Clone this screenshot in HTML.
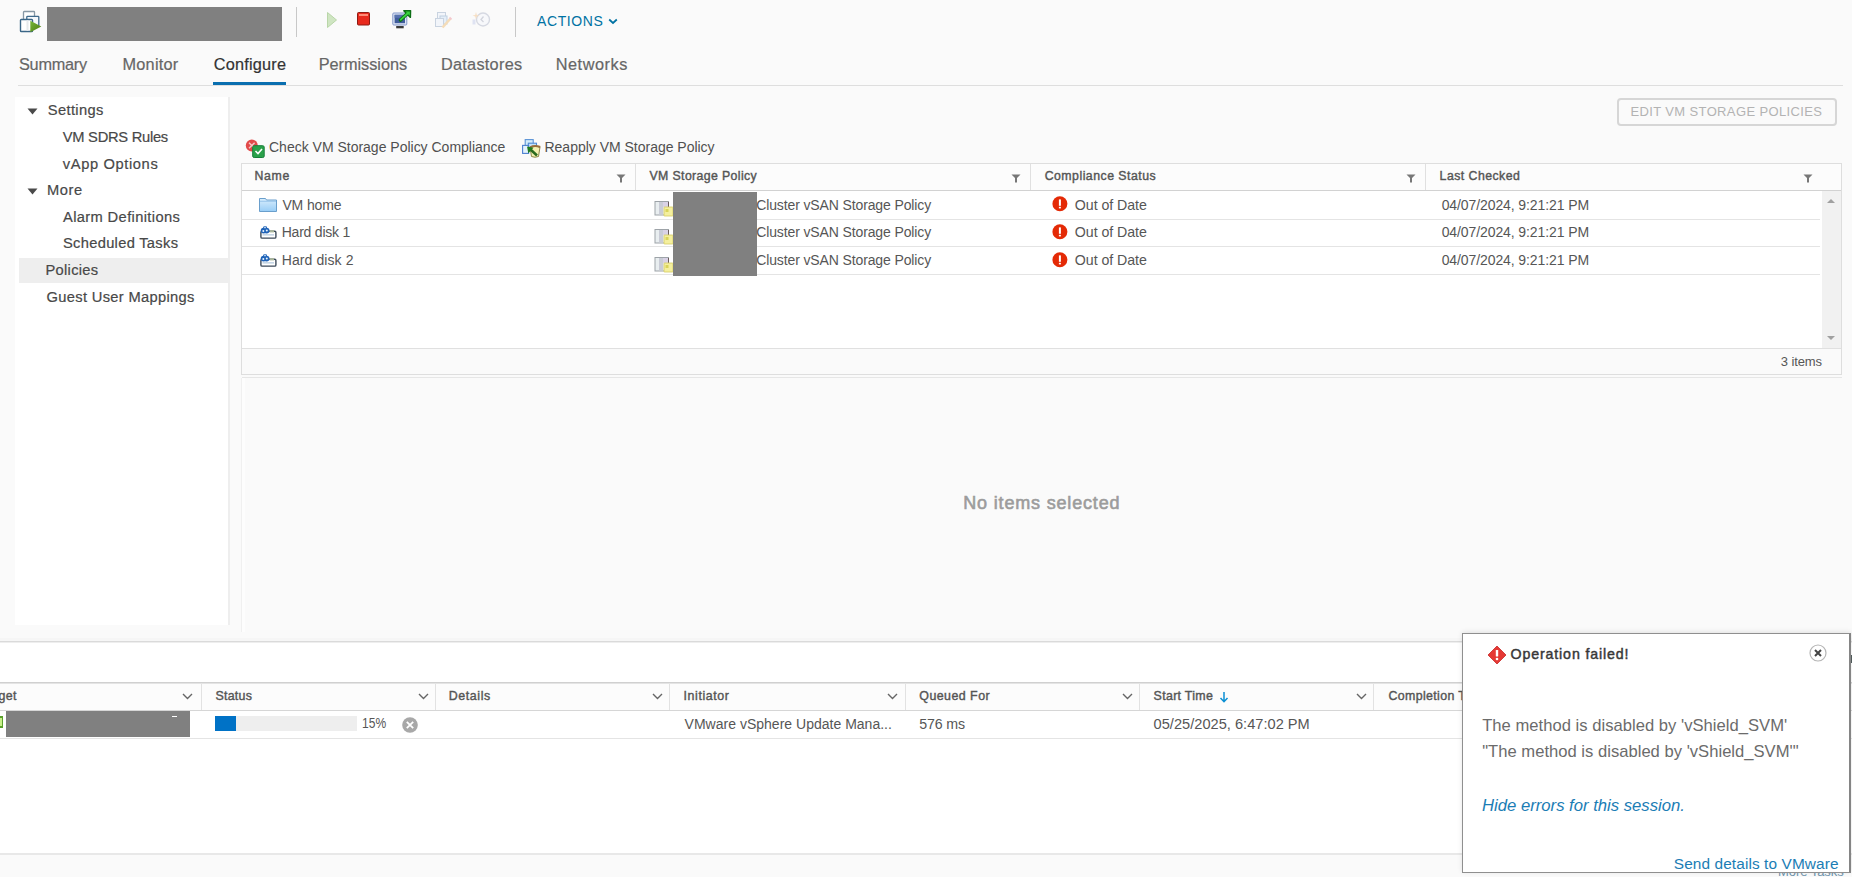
<!DOCTYPE html>
<html><head><meta charset="utf-8"><title>vSphere</title>
<style>
html,body{margin:0;padding:0;}
body{width:1852px;height:877px;overflow:hidden;position:relative;background:#fafafa;font-family:"Liberation Sans", sans-serif;}
body>div,body>svg{position:absolute;white-space:nowrap;}
</style></head><body>
<svg style="left:18px;top:9px;" width="26" height="26" viewBox="0 0 26 26">
<defs><linearGradient id="vg" x1="0" y1="0" x2="1" y2="1"><stop offset="0" stop-color="#77b83a"/><stop offset="1" stop-color="#4c7a12"/></linearGradient></defs>
<rect x="5.5" y="2.5" width="11" height="9" rx="0.7" fill="#fff" stroke="#8798a5" stroke-width="1.3"/>
<rect x="8.8" y="7.3" width="12" height="10" rx="0.7" fill="#f4f8fc" stroke="#3f6a8c" stroke-width="1.3"/>
<rect x="2.5" y="10.5" width="12" height="12" rx="0.8" fill="#fff" stroke="#3b6687" stroke-width="1.4"/>
<rect x="8.5" y="11.3" width="2" height="10.5" fill="#e6e9ec"/>
<path d="M12.3 11.8 L23.3 17.5 L12.3 23.3 Z" fill="url(#vg)"/>
</svg>
<div style="left:47px;top:7px;width:235px;height:34px;background:#808080;"></div>
<div style="left:296px;top:7px;width:1px;height:30px;background:#c8c8c8;"></div>
<div style="left:515px;top:7px;width:1px;height:30px;background:#c8c8c8;"></div>
<svg style="left:326px;top:11px;" width="12" height="18" viewBox="0 0 12 18"><path d="M1.5 1.5 L10.5 9 L1.5 16.5 Z" fill="#cfe5c2" stroke="#b9d6a8" stroke-width="1"/></svg>
<svg style="left:357px;top:12px;" width="13" height="14" viewBox="0 0 13 14"><rect x="0.5" y="0.5" width="12" height="12.5" rx="1" fill="#e8291c" stroke="#8d1a12" stroke-width="1"/><rect x="2" y="2" width="9" height="2" fill="#ff8a75"/></svg>
<svg style="left:391px;top:8px;" width="22" height="22" viewBox="0 0 22 22">
<rect x="1.8" y="5" width="14" height="12" rx="1" fill="#dfe6f6" stroke="#8096c9" stroke-width="1"/>
<rect x="3.6" y="6.8" width="10.4" height="8.4" fill="#3f5c9c"/>
<rect x="3.6" y="6.8" width="10.4" height="3" fill="#5873b0"/>
<rect x="5.2" y="18" width="7.5" height="2.3" fill="#3a3a3a"/>
<path d="M9.5 12 L17 5" stroke="#0d6e16" stroke-width="3.6" stroke-linecap="round"/>
<path d="M12.8 2.8 L19.6 2.6 L19.4 9.4 Z" fill="#39d43f" stroke="#0d6e16" stroke-width="1.4" stroke-linejoin="round"/>
<path d="M9.8 11.7 L16.5 5.5" stroke="#39d43f" stroke-width="1.8" stroke-linecap="round"/>
</svg>
<svg style="left:434px;top:11px;" width="20" height="19" viewBox="0 0 20 19">
<rect x="3.5" y="1.5" width="8" height="7" fill="#f2f5fa" stroke="#c9d3e0" stroke-width="1"/>
<rect x="6" y="5" width="7" height="8" fill="#e4eef8" stroke="#c0cfe0" stroke-width="1"/>
<rect x="1.5" y="7.5" width="8" height="8" fill="#f2f5fa" stroke="#c9d3e0" stroke-width="1"/>
<path d="M8.5 16.5 L16.5 7.5" stroke="#f4dcb8" stroke-width="2.6"/>
<path d="M15.5 6.5 L17.5 8.3" stroke="#f4c8cf" stroke-width="1.8"/>
</svg>
<svg style="left:470px;top:10px;" width="22" height="19" viewBox="0 0 22 19">
<circle cx="13" cy="9.5" r="6.5" fill="#f7f8fb" stroke="#d6d9e2" stroke-width="1.4"/>
<path d="M13.5 6.5 L11 9.5 L13.5 12" stroke="#d2d5dd" stroke-width="1.3" fill="none"/>
<path d="M6 2 L6.8 5 L9.5 5.5 L6.8 6.5 L6 9.5 L5.2 6.5 L2.5 5.5 L5.2 5 Z" fill="#f6dfc4"/>
<rect x="2.5" y="9.5" width="3" height="5" fill="#dfe3f2"/>
</svg>
<div style="left:537.00px;top:12.90px;font-size:14px;line-height:16.8px;color:#0072a3;letter-spacing:0.618px;">ACTIONS</div>
<svg style="left:608px;top:18px;" width="10" height="7" viewBox="0 0 10 7"><path d="M1.2 1.5 L5 5 L8.8 1.5" stroke="#0072a3" stroke-width="1.7" fill="none"/></svg>
<div style="left:19.00px;top:54.52px;font-size:16.3px;line-height:19.56px;color:#666;letter-spacing:-0.253px;-webkit-text-stroke:0.2px currentColor;">Summary</div>
<div style="left:122.50px;top:54.52px;font-size:16.3px;line-height:19.56px;color:#666;letter-spacing:0.239px;-webkit-text-stroke:0.2px currentColor;">Monitor</div>
<div style="left:213.70px;top:54.52px;font-size:16.3px;line-height:19.56px;color:#333;letter-spacing:0.22px;-webkit-text-stroke:0.2px currentColor;">Configure</div>
<div style="left:318.70px;top:54.52px;font-size:16.3px;line-height:19.56px;color:#666;letter-spacing:-0.022px;-webkit-text-stroke:0.2px currentColor;">Permissions</div>
<div style="left:440.90px;top:54.52px;font-size:16.3px;line-height:19.56px;color:#666;letter-spacing:0.279px;-webkit-text-stroke:0.2px currentColor;">Datastores</div>
<div style="left:555.70px;top:54.52px;font-size:16.3px;line-height:19.56px;color:#666;letter-spacing:0.541px;-webkit-text-stroke:0.2px currentColor;">Networks</div>
<div style="left:18px;top:85px;width:1825px;height:1px;background:#dedede;"></div>
<div style="left:213px;top:82px;width:73px;height:3px;background:#0a6fb0;"></div>
<div style="left:15px;top:97px;width:213px;height:528px;background:#fff;"></div>
<div style="left:228px;top:97px;width:2px;height:528px;background:#eeeeee;"></div>
<div style="left:19px;top:258px;width:209px;height:25px;background:#eeeeee;"></div>
<svg style="left:27px;top:108px;" width="11" height="7" viewBox="0 0 11 7"><path d="M0.5 0.5 L10.5 0.5 L5.5 6.5 Z" fill="#4a4a4a"/></svg>
<svg style="left:27px;top:187.5px;" width="11" height="7" viewBox="0 0 11 7"><path d="M0.5 0.5 L10.5 0.5 L5.5 6.5 Z" fill="#4a4a4a"/></svg>
<div style="left:47.80px;top:102.44px;font-size:14.7px;line-height:17.64px;color:#484848;letter-spacing:0.353px;-webkit-text-stroke:0.2px currentColor;">Settings</div>
<div style="left:62.80px;top:128.94px;font-size:14.7px;line-height:17.64px;color:#484848;letter-spacing:-0.267px;-webkit-text-stroke:0.2px currentColor;">VM SDRS Rules</div>
<div style="left:62.80px;top:155.53px;font-size:14.7px;line-height:17.64px;color:#484848;letter-spacing:0.615px;-webkit-text-stroke:0.2px currentColor;">vApp Options</div>
<div style="left:47.00px;top:182.13px;font-size:14.7px;line-height:17.64px;color:#484848;letter-spacing:0.535px;-webkit-text-stroke:0.2px currentColor;">More</div>
<div style="left:63.00px;top:208.73px;font-size:14.7px;line-height:17.64px;color:#484848;letter-spacing:0.365px;-webkit-text-stroke:0.2px currentColor;">Alarm Definitions</div>
<div style="left:63.00px;top:235.34px;font-size:14.7px;line-height:17.64px;color:#484848;letter-spacing:0.3px;-webkit-text-stroke:0.2px currentColor;">Scheduled Tasks</div>
<div style="left:45.50px;top:261.93px;font-size:14.7px;line-height:17.64px;color:#484848;letter-spacing:0.291px;-webkit-text-stroke:0.2px currentColor;">Policies</div>
<div style="left:46.50px;top:288.53px;font-size:14.7px;line-height:17.64px;color:#484848;letter-spacing:0.322px;-webkit-text-stroke:0.2px currentColor;">Guest User Mappings</div>
<div style="left:1617px;top:98px;width:220px;height:28px;background:transparent;border:2px solid #d6d6d6;border-radius:4px;box-sizing:border-box;"></div>
<div style="left:1630.50px;top:103.85px;font-size:13px;line-height:15.6px;color:#b3b3b3;letter-spacing:0.366px;">EDIT VM STORAGE POLICIES</div>
<svg style="left:244px;top:138px;" width="22" height="21" viewBox="0 0 22 21">
<circle cx="7.8" cy="7.5" r="6" fill="#e24a4a"/>
<path d="M5 4.7 L10.6 10.3 M10.6 4.7 L5 10.3" stroke="#f6c6c6" stroke-width="1.4"/>
<rect x="8.7" y="7.7" width="11.5" height="11.8" rx="1.5" fill="#2aa14a" stroke="#17803a" stroke-width="1"/>
<path d="M11.5 13 L14 15.5 L18 11" stroke="#fff" stroke-width="1.6" fill="none"/>
</svg>
<div style="left:269.00px;top:138.90px;font-size:14px;line-height:16.8px;color:#505050;letter-spacing:-0.005px;">Check VM Storage Policy Compliance</div>
<svg style="left:516px;top:134px;" width="30" height="28" viewBox="0 0 30 28">
<rect x="9.2" y="5.6" width="8" height="7.5" fill="#d3ecfb" stroke="#5b93d6" stroke-width="1.1"/>
<rect x="12.3" y="9.2" width="8.2" height="7" fill="#c2e2fa" stroke="#4f89d2" stroke-width="1.1"/>
<rect x="6.6" y="11.4" width="6" height="8" fill="#e3f3fd" stroke="#4c7fd0" stroke-width="1.1"/>
<path d="M14 13.5 Q19 11 24 13 L22.5 22.5 Q19 24 15.5 22.5 Z" fill="#f3f0b0" stroke="#7f7a3a" stroke-width="0.9"/>
<path d="M14 13.3 Q19 10.8 24.2 13" stroke="#9a6f3c" stroke-width="2" fill="none"/>
<path d="M21 21.5 L14.5 15.5" stroke="#2a6a1e" stroke-width="2.6"/>
<path d="M11 12.5 L17.5 13.8 L12.3 19.3 Z" fill="#1f7a1f"/>
</svg>
<div style="left:544.50px;top:138.90px;font-size:14px;line-height:16.8px;color:#505050;letter-spacing:-0.013px;">Reapply VM Storage Policy</div>
<div style="left:241px;top:163px;width:1601px;height:212px;background:#fff;border:1px solid #dedede;box-sizing:border-box;"></div>
<div style="left:242px;top:164px;width:1599px;height:26px;background:#fcfcfc;"></div>
<div style="left:242px;top:190px;width:1599px;height:1px;background:#d2d2d2;"></div>
<div style="left:635px;top:164px;width:1px;height:26px;background:#e0e0e0;"></div>
<div style="left:1030px;top:164px;width:1px;height:26px;background:#e0e0e0;"></div>
<div style="left:1425px;top:164px;width:1px;height:26px;background:#e0e0e0;"></div>
<div style="left:254.40px;top:168.81px;font-size:12.3px;line-height:14.76px;color:#555555;letter-spacing:0.679px;-webkit-text-stroke:0.4px currentColor;">Name</div>
<div style="left:649.50px;top:168.81px;font-size:12.3px;line-height:14.76px;color:#555555;letter-spacing:0.381px;-webkit-text-stroke:0.4px currentColor;">VM Storage Policy</div>
<div style="left:1044.70px;top:168.81px;font-size:12.3px;line-height:14.76px;color:#555555;letter-spacing:0.484px;-webkit-text-stroke:0.4px currentColor;">Compliance Status</div>
<div style="left:1439.60px;top:168.81px;font-size:12.3px;line-height:14.76px;color:#555555;letter-spacing:0.459px;-webkit-text-stroke:0.4px currentColor;">Last Checked</div>
<svg style="left:615.5px;top:174px;" width="10" height="9" viewBox="0 0 10 9"><path d="M0.5 0.5 L9.5 0.5 L6 4 L6 8.5 L4 8.5 L4 4 Z" fill="#777"/></svg>
<svg style="left:1010.5px;top:174px;" width="10" height="9" viewBox="0 0 10 9"><path d="M0.5 0.5 L9.5 0.5 L6 4 L6 8.5 L4 8.5 L4 4 Z" fill="#777"/></svg>
<svg style="left:1406px;top:174px;" width="10" height="9" viewBox="0 0 10 9"><path d="M0.5 0.5 L9.5 0.5 L6 4 L6 8.5 L4 8.5 L4 4 Z" fill="#777"/></svg>
<svg style="left:1802.5px;top:174px;" width="10" height="9" viewBox="0 0 10 9"><path d="M0.5 0.5 L9.5 0.5 L6 4 L6 8.5 L4 8.5 L4 4 Z" fill="#777"/></svg>
<div style="left:242px;top:219px;width:1578px;height:1px;background:#e4e4e4;"></div>
<div style="left:242px;top:246px;width:1578px;height:1px;background:#e4e4e4;"></div>
<div style="left:242px;top:274px;width:1578px;height:1px;background:#e4e4e4;"></div>
<svg style="left:258px;top:197px;" width="20" height="16" viewBox="0 0 20 16">
<defs><linearGradient id="fg" x1="0" y1="0" x2="0" y2="1"><stop offset="0" stop-color="#d9eefd"/><stop offset="1" stop-color="#98cdf6"/></linearGradient></defs>
<path d="M1.5 1.5 L7.5 1.5 L8.5 3 L18.5 3 L18.5 14.5 L1.5 14.5 Z" fill="url(#fg)" stroke="#6a9fcc" stroke-width="1" stroke-linejoin="round"/>
<path d="M2 4.3 L18 4.3" stroke="#8dbde6" stroke-width="0.8"/>
</svg>
<svg style="left:260px;top:225px;" width="17" height="14" viewBox="0 0 17 14">
<rect x="0.9" y="6.3" width="15" height="6.8" rx="1.2" fill="#fff" stroke="#3c4a5a" stroke-width="1.4"/>
<rect x="2.5" y="9.2" width="11.5" height="1.3" fill="#b8cde0"/>
<rect x="9.5" y="5.2" width="4.5" height="2.2" fill="#a9b59a"/>
<circle cx="3.6" cy="5.6" r="2.9" fill="#1f63b8"/>
<circle cx="6.6" cy="5.6" r="2.9" fill="#1f63b8"/>
<rect x="3.2" y="1.2" width="3.8" height="3.6" rx="1.2" fill="#1f63b8"/>
<circle cx="3.3" cy="5.9" r="1" fill="#e8f4ff"/>
<circle cx="6.8" cy="5.4" r="1" fill="#e8f4ff"/>
<circle cx="5" cy="2.6" r="0.8" fill="#e8f4ff"/>
</svg>
<svg style="left:260px;top:253px;" width="17" height="14" viewBox="0 0 17 14">
<rect x="0.9" y="6.3" width="15" height="6.8" rx="1.2" fill="#fff" stroke="#3c4a5a" stroke-width="1.4"/>
<rect x="2.5" y="9.2" width="11.5" height="1.3" fill="#b8cde0"/>
<rect x="9.5" y="5.2" width="4.5" height="2.2" fill="#a9b59a"/>
<circle cx="3.6" cy="5.6" r="2.9" fill="#1f63b8"/>
<circle cx="6.6" cy="5.6" r="2.9" fill="#1f63b8"/>
<rect x="3.2" y="1.2" width="3.8" height="3.6" rx="1.2" fill="#1f63b8"/>
<circle cx="3.3" cy="5.9" r="1" fill="#e8f4ff"/>
<circle cx="6.8" cy="5.4" r="1" fill="#e8f4ff"/>
<circle cx="5" cy="2.6" r="0.8" fill="#e8f4ff"/>
</svg>
<div style="left:282.40px;top:196.90px;font-size:14px;line-height:16.8px;color:#565656;letter-spacing:-0.121px;">VM home</div>
<div style="left:281.70px;top:224.40px;font-size:14px;line-height:16.8px;color:#565656;letter-spacing:-0.212px;">Hard disk 1</div>
<div style="left:281.70px;top:252.00px;font-size:14px;line-height:16.8px;color:#565656;letter-spacing:0.098px;">Hard disk 2</div>
<svg style="left:654px;top:200px;" width="20" height="17" viewBox="0 0 20 17">
<rect x="1" y="1.5" width="13.5" height="13.5" fill="#e9eef0" stroke="#9da3a8" stroke-width="1"/>
<rect x="5" y="2" width="4" height="12.5" fill="#c9ccd6"/>
<rect x="9" y="2" width="5" height="5" fill="#d9d2e6"/>
<rect x="14" y="2" width="1" height="6" fill="#6b5b5b"/>
<rect x="10" y="7" width="9" height="9" rx="0.5" fill="#f4ef9e" stroke="#d6cc60" stroke-width="0.8"/>
<rect x="11.5" y="9" width="3" height="3" fill="#d9d45a"/>
</svg>
<svg style="left:654px;top:228px;" width="20" height="17" viewBox="0 0 20 17">
<rect x="1" y="1.5" width="13.5" height="13.5" fill="#e9eef0" stroke="#9da3a8" stroke-width="1"/>
<rect x="5" y="2" width="4" height="12.5" fill="#c9ccd6"/>
<rect x="9" y="2" width="5" height="5" fill="#d9d2e6"/>
<rect x="14" y="2" width="1" height="6" fill="#6b5b5b"/>
<rect x="10" y="7" width="9" height="9" rx="0.5" fill="#f4ef9e" stroke="#d6cc60" stroke-width="0.8"/>
<rect x="11.5" y="9" width="3" height="3" fill="#d9d45a"/>
</svg>
<svg style="left:654px;top:256px;" width="20" height="17" viewBox="0 0 20 17">
<rect x="1" y="1.5" width="13.5" height="13.5" fill="#e9eef0" stroke="#9da3a8" stroke-width="1"/>
<rect x="5" y="2" width="4" height="12.5" fill="#c9ccd6"/>
<rect x="9" y="2" width="5" height="5" fill="#d9d2e6"/>
<rect x="14" y="2" width="1" height="6" fill="#6b5b5b"/>
<rect x="10" y="7" width="9" height="9" rx="0.5" fill="#f4ef9e" stroke="#d6cc60" stroke-width="0.8"/>
<rect x="11.5" y="9" width="3" height="3" fill="#d9d45a"/>
</svg>
<div style="left:673px;top:192px;width:84px;height:84px;background:#808080;"></div>
<div style="left:756.20px;top:196.90px;font-size:14px;line-height:16.8px;color:#565656;letter-spacing:-0.122px;">Cluster vSAN Storage Policy</div>
<div style="left:1074.80px;top:196.71px;font-size:14.2px;line-height:17.04px;color:#565656;letter-spacing:-0.046px;">Out of Date</div>
<div style="left:1441.70px;top:196.90px;font-size:14px;line-height:16.8px;color:#565656;letter-spacing:-0.099px;">04/07/2024, 9:21:21 PM</div>
<div style="left:756.20px;top:224.40px;font-size:14px;line-height:16.8px;color:#565656;letter-spacing:-0.122px;">Cluster vSAN Storage Policy</div>
<div style="left:1074.80px;top:224.21px;font-size:14.2px;line-height:17.04px;color:#565656;letter-spacing:-0.046px;">Out of Date</div>
<div style="left:1441.70px;top:224.40px;font-size:14px;line-height:16.8px;color:#565656;letter-spacing:-0.099px;">04/07/2024, 9:21:21 PM</div>
<div style="left:756.20px;top:252.00px;font-size:14px;line-height:16.8px;color:#565656;letter-spacing:-0.122px;">Cluster vSAN Storage Policy</div>
<div style="left:1074.80px;top:251.81px;font-size:14.2px;line-height:17.04px;color:#565656;letter-spacing:-0.046px;">Out of Date</div>
<div style="left:1441.70px;top:252.00px;font-size:14px;line-height:16.8px;color:#565656;letter-spacing:-0.099px;">04/07/2024, 9:21:21 PM</div>
<svg style="left:1052px;top:196px;" width="16" height="16" viewBox="0 0 16 16"><circle cx="7.9" cy="7.7" r="7.5" fill="#e42a06"/><rect x="6.9" y="3.4" width="2" height="6.4" fill="#fff"/><rect x="6.9" y="10.8" width="2" height="1.6" fill="#fff"/></svg>
<svg style="left:1052px;top:224px;" width="16" height="16" viewBox="0 0 16 16"><circle cx="7.9" cy="7.7" r="7.5" fill="#e42a06"/><rect x="6.9" y="3.4" width="2" height="6.4" fill="#fff"/><rect x="6.9" y="10.8" width="2" height="1.6" fill="#fff"/></svg>
<svg style="left:1052px;top:252px;" width="16" height="16" viewBox="0 0 16 16"><circle cx="7.9" cy="7.7" r="7.5" fill="#e42a06"/><rect x="6.9" y="3.4" width="2" height="6.4" fill="#fff"/><rect x="6.9" y="10.8" width="2" height="1.6" fill="#fff"/></svg>
<div style="left:1822px;top:191px;width:19px;height:157px;background:#f1f1f1;"></div>
<svg style="left:1825px;top:197px;" width="12" height="8" viewBox="0 0 12 8"><path d="M2 6 L6 2 L10 6 Z" fill="#a0a0a0"/></svg>
<svg style="left:1825px;top:334px;" width="12" height="8" viewBox="0 0 12 8"><path d="M2 2 L6 6 L10 2 Z" fill="#a0a0a0"/></svg>
<div style="left:242px;top:348px;width:1599px;height:26px;background:#fafafa;"></div>
<div style="left:242px;top:348px;width:1599px;height:1px;background:#e0e0e0;"></div>
<div style="left:1780.80px;top:353.85px;font-size:13px;line-height:15.6px;color:#565656;letter-spacing:-0.117px;">3 items</div>
<div style="left:242px;top:377px;width:1600px;height:1px;background:#e6e6e6;"></div>
<div style="left:244px;top:378px;width:1599px;height:254px;background:#fafafa;"></div>
<div style="left:241px;top:378px;width:4px;height:254px;background:#fdfdfd;"></div>
<div style="left:241px;top:378px;width:1px;height:254px;background:#f0f0f0;"></div>
<div style="left:963.30px;top:492.70px;font-size:18px;line-height:21.6px;color:#9c9c9c;letter-spacing:0.822px;-webkit-text-stroke:0.6px currentColor;">No items selected</div>
<div style="left:0px;top:638px;width:1852px;height:3px;background:#f6f6f6;"></div>
<div style="left:0px;top:641px;width:1852px;height:1px;background:#dadada;"></div>
<div style="left:0px;top:642px;width:1852px;height:1px;background:#eeeeee;"></div>
<div style="left:0px;top:643px;width:1852px;height:210px;background:#fff;"></div>
<div style="left:0px;top:682px;width:1852px;height:1px;background:#d0d0d0;"></div>
<div style="left:0px;top:683px;width:1852px;height:1px;background:#e4e4e4;"></div>
<div style="left:0px;top:684px;width:1852px;height:26px;background:#fcfcfc;"></div>
<div style="left:0px;top:710px;width:1852px;height:1px;background:#d6d6d6;"></div>
<div style="left:201px;top:684px;width:1px;height:26px;background:#e2e2e2;"></div>
<div style="left:435px;top:684px;width:1px;height:26px;background:#e2e2e2;"></div>
<div style="left:669px;top:684px;width:1px;height:26px;background:#e2e2e2;"></div>
<div style="left:905px;top:684px;width:1px;height:26px;background:#e2e2e2;"></div>
<div style="left:1139px;top:684px;width:1px;height:26px;background:#e2e2e2;"></div>
<div style="left:1373px;top:684px;width:1px;height:26px;background:#e2e2e2;"></div>
<div style="left:-1.50px;top:688.62px;font-size:12.4px;line-height:14.88px;color:#555555;letter-spacing:0.359px;-webkit-text-stroke:0.4px currentColor;">get</div>
<div style="left:215.40px;top:688.62px;font-size:12.4px;line-height:14.88px;color:#555555;letter-spacing:0.274px;-webkit-text-stroke:0.4px currentColor;">Status</div>
<div style="left:448.70px;top:688.62px;font-size:12.4px;line-height:14.88px;color:#555555;letter-spacing:0.62px;-webkit-text-stroke:0.4px currentColor;">Details</div>
<div style="left:683.60px;top:688.62px;font-size:12.4px;line-height:14.88px;color:#555555;letter-spacing:0.587px;-webkit-text-stroke:0.4px currentColor;">Initiator</div>
<div style="left:919.30px;top:688.62px;font-size:12.4px;line-height:14.88px;color:#555555;letter-spacing:0.467px;-webkit-text-stroke:0.4px currentColor;">Queued For</div>
<div style="left:1153.60px;top:688.62px;font-size:12.4px;line-height:14.88px;color:#555555;letter-spacing:0.312px;-webkit-text-stroke:0.4px currentColor;">Start Time</div>
<div style="left:1388.50px;top:688.62px;font-size:12.4px;line-height:14.88px;color:#555555;letter-spacing:0.353px;-webkit-text-stroke:0.4px currentColor;">Completion T</div>
<svg style="left:182px;top:692px;" width="11" height="9" viewBox="0 0 11 9"><path d="M1 2 L5.5 6.5 L10 2" stroke="#666" stroke-width="1.4" fill="none"/></svg>
<svg style="left:418px;top:692px;" width="11" height="9" viewBox="0 0 11 9"><path d="M1 2 L5.5 6.5 L10 2" stroke="#666" stroke-width="1.4" fill="none"/></svg>
<svg style="left:652px;top:692px;" width="11" height="9" viewBox="0 0 11 9"><path d="M1 2 L5.5 6.5 L10 2" stroke="#666" stroke-width="1.4" fill="none"/></svg>
<svg style="left:886.5px;top:692px;" width="11" height="9" viewBox="0 0 11 9"><path d="M1 2 L5.5 6.5 L10 2" stroke="#666" stroke-width="1.4" fill="none"/></svg>
<svg style="left:1121.5px;top:692px;" width="11" height="9" viewBox="0 0 11 9"><path d="M1 2 L5.5 6.5 L10 2" stroke="#666" stroke-width="1.4" fill="none"/></svg>
<svg style="left:1356px;top:692px;" width="11" height="9" viewBox="0 0 11 9"><path d="M1 2 L5.5 6.5 L10 2" stroke="#666" stroke-width="1.4" fill="none"/></svg>
<svg style="left:1219px;top:691px;" width="10" height="12" viewBox="0 0 10 12"><path d="M5 1 L5 10.5 M1.5 7 L5 10.7 L8.5 7" stroke="#0b8fd3" stroke-width="1.5" fill="none"/></svg>
<div style="left:0px;top:738px;width:1852px;height:1px;background:#e4e4e4;"></div>
<div style="left:6px;top:711px;width:184px;height:26px;background:#808080;"></div>
<div style="left:0px;top:716px;width:3px;height:12px;background:#5aa02c;"></div>
<div style="left:0px;top:718px;width:1.5px;height:8px;background:#c8f08a;"></div>
<div style="left:171.5px;top:716px;width:5.5px;height:1.2px;background:#ffffff;"></div>
<div style="left:215px;top:716px;width:142px;height:15px;background:#eeeeee;"></div>
<div style="left:215px;top:716px;width:21px;height:15px;background:#0072c6;"></div>
<div style="left:361.77px;top:715.23px;font-size:14.6px;line-height:17.52px;color:#565656;transform:scaleX(0.8253);transform-origin:0 0;">15%</div>
<svg style="left:401px;top:716px;" width="18" height="18" viewBox="0 0 18 18"><circle cx="9" cy="9" r="7.8" fill="#a8a8a8"/><path d="M5.8 5.8 L12.2 12.2 M12.2 5.8 L5.8 12.2" stroke="#fff" stroke-width="1.8"/></svg>
<div style="left:684.60px;top:715.80px;font-size:14px;line-height:16.8px;color:#565656;letter-spacing:0.011px;">VMware vSphere Update Mana...</div>
<div style="left:919.30px;top:715.61px;font-size:14.2px;line-height:17.04px;color:#565656;letter-spacing:-0.166px;">576 ms</div>
<div style="left:1153.60px;top:715.93px;font-size:14.6px;line-height:17.52px;color:#565656;letter-spacing:0.018px;">05/25/2025, 6:47:02 PM</div>
<div style="left:0px;top:853px;width:1852px;height:2px;background:#e8e8e8;"></div>
<div style="left:0px;top:855px;width:1852px;height:22px;background:#fafafa;"></div>
<div style="left:1778.00px;top:864.15px;font-size:13px;line-height:15.6px;color:#6f94ad;letter-spacing:-0.051px;">More Tasks</div>
<div style="left:1462px;top:633px;width:389px;height:240px;background:#fff;border:1px solid #8f8f8f;border-right:2px solid #858585;box-sizing:border-box;box-shadow:0 -1px 5px rgba(0,0,0,0.10);"></div>
<div style="left:1851px;top:655px;width:1px;height:8px;background:#4f5a5a;"></div>
<svg style="left:1487px;top:645px;" width="20" height="20" viewBox="0 0 20 20"><path d="M10 1 L19 10 L10 19 L1 10 Z" fill="#e53935" stroke="#c62828" stroke-width="0.8"/><rect x="8.8" y="5" width="2.4" height="6.5" rx="0.6" fill="#fff"/><circle cx="10" cy="14" r="1.3" fill="#fff"/></svg>
<div style="left:1510.50px;top:646.11px;font-size:14.2px;line-height:17.04px;color:#383838;letter-spacing:0.871px;-webkit-text-stroke:0.45px currentColor;">Operation failed!</div>
<svg style="left:1809px;top:644px;" width="18" height="18" viewBox="0 0 18 18"><circle cx="9" cy="9" r="8" fill="#fff" stroke="#b5b5b5" stroke-width="1.2"/><path d="M6 6 L12 12 M12 6 L6 12" stroke="#444" stroke-width="2"/></svg>
<div style="left:1482.20px;top:715.53px;font-size:16.6px;line-height:19.92px;color:#6b6b6b;letter-spacing:0.019px;">The method is disabled by 'vShield_SVM'</div>
<div style="left:1482.20px;top:742.43px;font-size:16.6px;line-height:19.92px;color:#6b6b6b;letter-spacing:0.009px;">"The method is disabled by 'vShield_SVM'"</div>
<div style="left:1482.00px;top:796.03px;font-size:16.7px;line-height:20.04px;color:#1b7db5;letter-spacing:-0.006px;font-style:italic;">Hide errors for this session.</div>
<div style="left:1673.80px;top:854.67px;font-size:15.4px;line-height:18.48px;color:#1b7db5;letter-spacing:0.101px;">Send details to VMware</div>
</body></html>
